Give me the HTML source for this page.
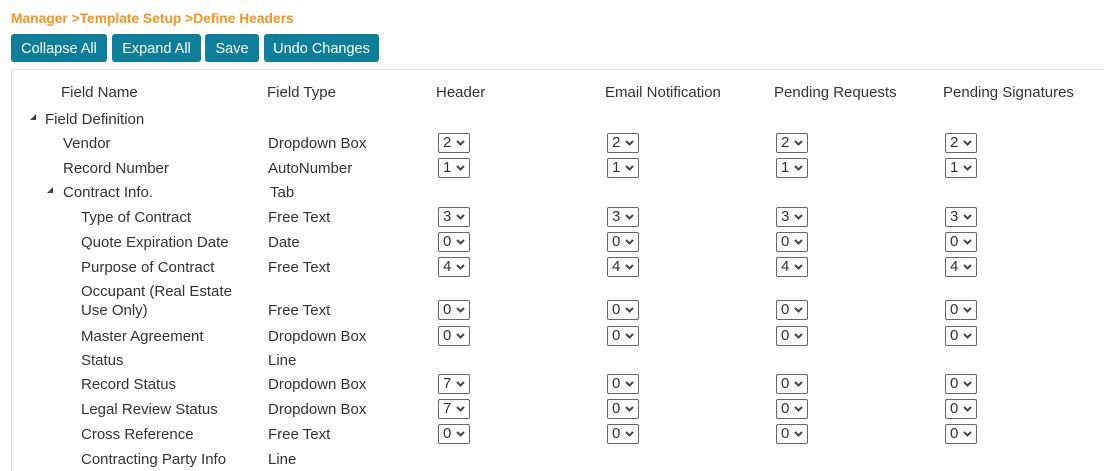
<!DOCTYPE html>
<html><head><style>
html,body{margin:0;width:1104px;height:471px;overflow:hidden}
body{background:#fff;font-family:"Liberation Sans",sans-serif;color:#333;position:relative}
.a{position:absolute;font-size:15px;line-height:17px;white-space:nowrap}
.bc{position:absolute;left:11px;top:11px;color:#f7941d;font-weight:bold;font-size:13.8px}
.btn{position:absolute;top:34px;height:28px;background:#0e7f9a;color:#fff;border-radius:3px;font-size:14.5px;line-height:30px;text-align:center}
.panel{position:absolute;left:11px;top:69px;width:1100px;height:420px;border:1px solid #ddd;border-radius:4px}
.s{position:absolute;width:30px;height:18px;border:1px solid #666;border-radius:2px;font-size:15px;line-height:18px;box-sizing:content-box}
.s span{position:absolute;left:4px;top:0}
.s svg{position:absolute;right:4px;top:6px}
.tri{position:absolute;width:0;height:0;border-left:6px solid transparent;border-bottom:6px solid #444}
</style></head><body>
<div class="bc">Manager &gt;Template Setup &gt;Define Headers</div>
<div class="btn" style="left:11px;width:96px">Collapse All</div>
<div class="btn" style="left:112px;width:89px">Expand All</div>
<div class="btn" style="left:205px;width:54px">Save</div>
<div class="btn" style="left:264px;width:115px">Undo Changes</div>
<div class="panel"></div>
<div class="a" style="left:61px;top:84px">Field Name</div>
<div class="a" style="left:267px;top:84px">Field Type</div>
<div class="a" style="left:436px;top:84px">Header</div>
<div class="a" style="left:605px;top:84px">Email Notification</div>
<div class="a" style="left:774px;top:84px">Pending Requests</div>
<div class="a" style="left:943px;top:84px">Pending Signatures</div>
<div class="tri" style="left:30px;top:114px"></div>
<div class="a" style="left:45px;top:111px">Field Definition</div>
<div class="tri" style="left:47px;top:187px"></div>
<div id="rows"></div>
<script>
var R=[[63,"Vendor","Dropdown Box",143,"2222"],[63,"Record Number","AutoNumber",168,"1111"],[63,"Contract Info.","Tab",192,null],
[81,"Type of Contract","Free Text",217,"3333"],[81,"Quote Expiration Date","Date",242,"0000"],[81,"Purpose of Contract","Free Text",267,"4444"],
[81,"Occupant (Real Estate","",291,null],[81,"Use Only)","Free Text",310,"0000"],[81,"Master Agreement","Dropdown Box",336,"0000"],
[81,"Status","Line",360,null],[81,"Record Status","Dropdown Box",384,"7000"],[81,"Legal Review Status","Dropdown Box",409,"7000"],
[81,"Cross Reference","Free Text",434,"0000"],[81,"Contracting Party Info","Line",459,null]];
var X=[438,607,776,945],h="";
R.forEach(function(r){var t=r[3]-8;
h+='<div class="a" style="left:'+r[0]+'px;top:'+t+'px">'+r[1]+'</div>';
if(r[2])h+='<div class="a" style="left:'+(r[2]=="Tab"?270:268)+'px;top:'+t+'px">'+r[2]+'</div>';
if(r[4])for(var i=0;i<4;i++)h+='<div class="s" style="left:'+X[i]+'px;top:'+(r[3]-10)+'px"><span>'+r[4][i]+'</span><svg width="9" height="6" viewBox="0 0 9 6"><path d="M1 1L4.5 4.5L8 1" stroke="#444" stroke-width="2" fill="none"/></svg></div>';});
document.getElementById("rows").innerHTML=h;
</script>
</body></html>
